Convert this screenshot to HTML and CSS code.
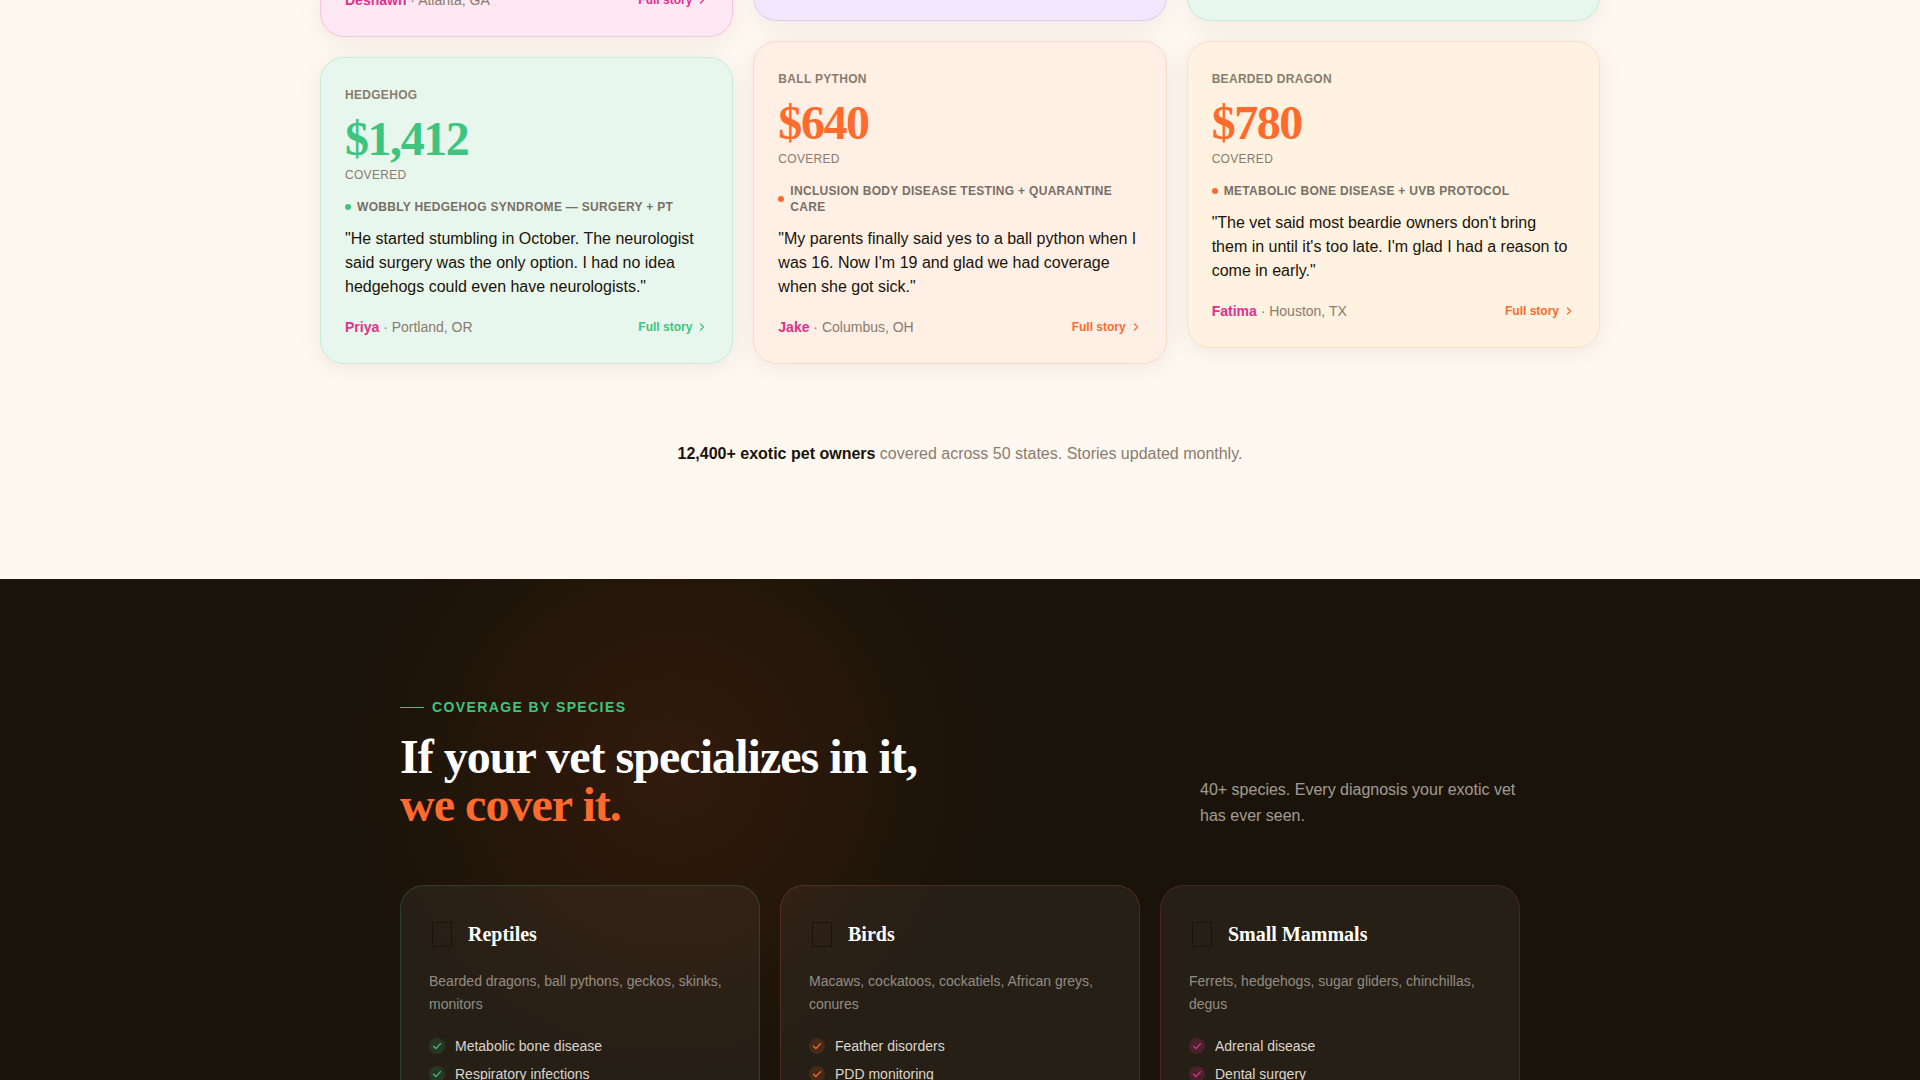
FILE: index.html
```html
<!DOCTYPE html>
<html lang="en">
<head>
  <meta charset="UTF-8">
  <meta name="viewport" content="width=device-width, initial-scale=1.0">
  <title>Exotic Pet Coverage</title>
  <link rel="stylesheet" href="styles.css">
</head>
<body>
  <svg width="0" height="0" class="sprite" aria-hidden="true">
    <symbol id="chevron" viewBox="0 0 12 12">
      <path d="M4.5 3l3 3-3 3" fill="none" stroke="currentColor" stroke-width="1.3" stroke-linecap="round" stroke-linejoin="round"/>
    </symbol>
    <symbol id="check" viewBox="0 0 16 16">
      <path d="M4.5 8.3l2.4 2.3 4.6-5" fill="none" stroke="currentColor" stroke-width="1.3" stroke-linecap="round" stroke-linejoin="round"/>
    </symbol>
  </svg>

  <section class="stories">
    <div class="story-grid">
      <div class="story-col">
        <article class="story story-tail pink">
          <div class="story-footer">
            <span><b>Deshawn</b> · Atlanta, GA</span>
            <a href="#">Full story <svg><use href="#chevron"/></svg></a>
          </div>
        </article>
        <article class="story green">
          <p class="species">Hedgehog</p>
          <p class="amount">$1,412</p>
          <p class="covered">Covered</p>
          <p class="diagnosis"><span>Wobbly Hedgehog Syndrome — Surgery + PT</span></p>
          <blockquote>"He started stumbling in October. The neurologist said surgery was the only option. I had no idea hedgehogs could even have neurologists."</blockquote>
          <div class="story-footer">
            <span><b>Priya</b> · Portland, OR</span>
            <a href="#">Full story <svg><use href="#chevron"/></svg></a>
          </div>
        </article>
      </div>

      <div class="story-col">
        <article class="story story-tail purple"></article>
        <article class="story orange">
          <p class="species">Ball Python</p>
          <p class="amount">$640</p>
          <p class="covered">Covered</p>
          <p class="diagnosis"><span>Inclusion Body Disease testing + quarantine care</span></p>
          <blockquote>"My parents finally said yes to a ball python when I was 16. Now I'm 19 and glad we had coverage when she got sick."</blockquote>
          <div class="story-footer">
            <span><b>Jake</b> · Columbus, OH</span>
            <a href="#">Full story <svg><use href="#chevron"/></svg></a>
          </div>
        </article>
      </div>

      <div class="story-col">
        <article class="story story-tail green"></article>
        <article class="story cream">
          <p class="species">Bearded Dragon</p>
          <p class="amount">$780</p>
          <p class="covered">Covered</p>
          <p class="diagnosis"><span>Metabolic Bone Disease + UVB protocol</span></p>
          <blockquote>"The vet said most beardie owners don't bring them in until it's too late. I'm glad I had a reason to come in early."</blockquote>
          <div class="story-footer">
            <span><b>Fatima</b> · Houston, TX</span>
            <a href="#">Full story <svg><use href="#chevron"/></svg></a>
          </div>
        </article>
      </div>
    </div>
    <p class="stat"><strong>12,400+ exotic pet owners</strong> covered across 50 states. Stories updated monthly.</p>
  </section>

  <section class="coverage">
    <div class="container">
      <header class="coverage-header">
        <div>
          <p class="eyebrow">Coverage by species</p>
          <h2>If your vet specializes in it,<br><em>we cover it.</em></h2>
        </div>
        <p class="lead">40+ species. Every diagnosis your exotic vet has ever seen.</p>
      </header>

      <div class="species-grid">
        <article class="species-card green">
          <div class="card-head"><i class="glyph"></i><h3>Reptiles</h3></div>
          <p>Bearded dragons, ball pythons, geckos, skinks, monitors</p>
          <ul>
            <li><svg><use href="#check"/></svg>Metabolic bone disease</li>
            <li><svg><use href="#check"/></svg>Respiratory infections</li>
          </ul>
        </article>
        <article class="species-card orange">
          <div class="card-head"><i class="glyph"></i><h3>Birds</h3></div>
          <p>Macaws, cockatoos, cockatiels, African greys, conures</p>
          <ul>
            <li><svg><use href="#check"/></svg>Feather disorders</li>
            <li><svg><use href="#check"/></svg>PDD monitoring</li>
          </ul>
        </article>
        <article class="species-card pink">
          <div class="card-head"><i class="glyph"></i><h3>Small Mammals</h3></div>
          <p>Ferrets, hedgehogs, sugar gliders, chinchillas, degus</p>
          <ul>
            <li><svg><use href="#check"/></svg>Adrenal disease</li>
            <li><svg><use href="#check"/></svg>Dental surgery</li>
          </ul>
        </article>
      </div>
    </div>
  </section>
</body>
</html>
```
FILE: styles.css
```css
:root {
  --cream: #fff8f1;
  --ink: #1a1309;
  --muted: #8a7b6e;
  --orange: #ff6b2c;
  --green: #3dc47e;
  --pink: #e0318c;
}
* {
  box-sizing: border-box;
  margin: 0;
  padding: 0;
}
body {
  font-family: "Liberation Sans", Arial, sans-serif;
  font-size: 16px;
  line-height: 24px;
  background: var(--cream);
  color: var(--ink);
}
a {
  text-decoration: none;
}
.sprite {
  position: absolute;
}

/* Stories */
.stories {
  overflow: hidden;
  padding: 0 24px 112px;
}
.story-grid {
  display: grid;
  grid-template-columns: repeat(3, 1fr);
  gap: 20px;
  align-items: start;
  max-width: 1280px;
  margin: -8px auto 0;
}
.story-col {
  display: flex;
  flex-direction: column;
  gap: 20px;
}
.story {
  padding: 29px 24px 28px;
  border: 1px solid;
  border-radius: 24px;
  box-shadow: 0 4px 24px rgba(26, 18, 9, 0.07);
}
.story-tail {
  padding-top: 0;
  border-top: 0;
  border-radius: 0 0 24px 24px;
}
.story.green {
  --accent: var(--green);
  background: #e8f7ed;
  border-color: #c5edd6;
}
.story.orange {
  --accent: var(--orange);
  background: #ffefe5;
  border-color: #fbd9cc;
}
.story.cream {
  --accent: var(--orange);
  background: #fff2e0;
  border-color: #fbdfcb;
}
.story.pink {
  --accent: var(--pink);
  background: #fde8f4;
  border-color: #f9c5e0;
}
.story.purple {
  --accent: #9b5de5;
  background: #f1e7ff;
  border-color: #dccbfa;
}
.species,
.covered,
.diagnosis {
  font-size: 12px;
  line-height: 16px;
  text-transform: uppercase;
  letter-spacing: 0.025em;
  color: var(--muted);
}
.species {
  font-weight: bold;
  margin-bottom: 12px;
}
.amount {
  font: bold 48px/48px "Liberation Serif", "Times New Roman", serif;
  letter-spacing: -0.03em;
  color: var(--accent);
  margin-bottom: 4px;
}
.diagnosis {
  display: flex;
  align-items: center;
  gap: 6px;
  margin: 16px 0 12px;
  font-weight: bold;
  color: #786f66;
}
.diagnosis::before {
  content: "";
  flex: none;
  width: 6px;
  height: 6px;
  border-radius: 50%;
  background: var(--accent);
}
.story-footer {
  display: flex;
  justify-content: space-between;
  align-items: center;
  margin-top: 20px;
  font-size: 14px;
  line-height: 16px;
  color: var(--muted);
}
.story-tail .story-footer {
  margin-top: 0;
}
.story-footer b {
  color: var(--pink);
}
.story-footer a {
  display: flex;
  align-items: center;
  gap: 4px;
  font-size: 12px;
  font-weight: bold;
  color: var(--accent);
}
.story-footer svg {
  width: 12px;
  height: 12px;
}
.stat {
  margin-top: 77px;
  line-height: 26px;
  text-align: center;
  color: var(--muted);
}
.stat strong {
  color: var(--ink);
}

/* Coverage */
.coverage {
  padding: 120px 24px;
  background: radial-gradient(circle 320px at 35% 190px, rgba(255, 95, 35, 0.1), rgba(255, 95, 35, 0)) var(--ink);
  color: #fff;
}
.container {
  max-width: 1120px;
  margin: 0 auto;
}
.coverage-header {
  display: flex;
  justify-content: space-between;
  align-items: flex-end;
  margin-bottom: 56px;
}
.eyebrow {
  display: flex;
  align-items: center;
  gap: 8px;
  margin-bottom: 18px;
  font-size: 14px;
  line-height: 16px;
  font-weight: bold;
  letter-spacing: 0.1em;
  text-transform: uppercase;
  color: var(--green);
}
.eyebrow::before {
  content: "";
  width: 24px;
  height: 1px;
  background: var(--green);
}
h2 {
  font: bold 48px/48px "Liberation Serif", "Times New Roman", serif;
  letter-spacing: -0.02em;
}
h2 em {
  font-style: normal;
  color: var(--orange);
}
.lead {
  max-width: 320px;
  line-height: 26px;
  color: rgba(255, 248, 240, 0.6);
}
.species-grid {
  display: grid;
  grid-template-columns: repeat(3, 1fr);
  gap: 20px;
}
.species-card {
  padding: 28px;
  border: 1px solid;
  border-radius: 24px;
  background: rgba(255, 255, 255, 0.05);
}
.species-card.green {
  --accent: var(--green);
  --tint: rgba(61, 196, 126, 0.15);
  border-color: rgba(61, 196, 126, 0.2);
}
.species-card.orange {
  --accent: var(--orange);
  --tint: rgba(255, 107, 44, 0.15);
  border-color: rgba(255, 90, 60, 0.2);
}
.species-card.pink {
  --accent: var(--pink);
  --tint: rgba(224, 49, 140, 0.2);
  border-color: rgba(224, 60, 80, 0.2);
}
.card-head {
  display: flex;
  align-items: center;
  gap: 16px;
  height: 40px;
  margin-bottom: 16px;
}
.glyph {
  width: 20px;
  height: 25px;
  margin-left: 3px;
  border: 1px solid var(--ink);
}
h3 {
  font: bold 20px/40px "Liberation Serif", "Times New Roman", serif;
}
.species-card p {
  font-size: 14px;
  line-height: 23px;
  color: rgba(255, 248, 240, 0.5);
}
.species-card ul {
  display: grid;
  gap: 8px;
  margin-top: 20px;
  list-style: none;
}
.species-card li {
  display: flex;
  align-items: center;
  gap: 10px;
  font-size: 14px;
  line-height: 20px;
  color: rgba(255, 248, 240, 0.85);
}
.species-card li svg {
  width: 16px;
  height: 16px;
  border-radius: 50%;
  background: var(--tint);
  color: var(--accent);
}
```
